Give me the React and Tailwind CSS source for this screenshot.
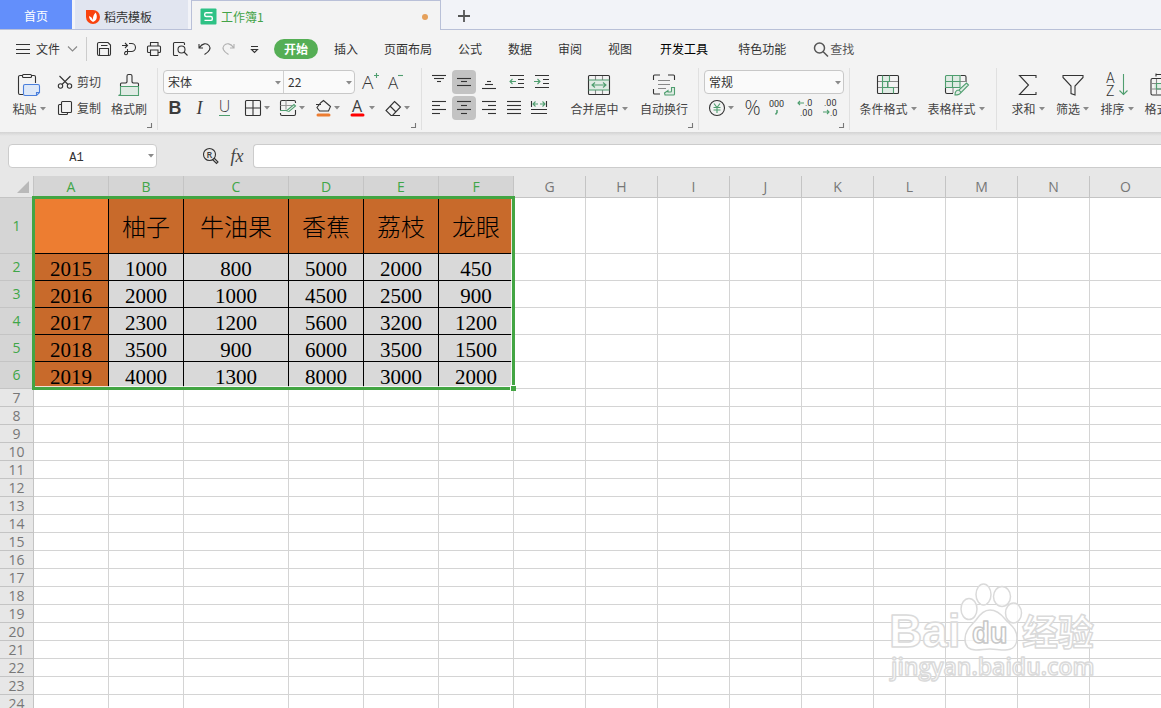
import clsx from 'clsx';

const menuItems = ['插入', '页面布局', '公式', '数据', '审阅', '视图'];
const extraMenuItems = ['开发工具', '特色功能'];

const columns = [
  { name: 'A', width: 'w-[75px]' },
  { name: 'B', width: 'w-[75px]' },
  { name: 'C', width: 'w-[105px]' },
  { name: 'D', width: 'w-[75px]' },
  { name: 'E', width: 'w-[75px]' },
  { name: 'F', width: 'w-[75px]' },
  { name: 'G', width: 'w-[72px]' },
  { name: 'H', width: 'w-[72px]' },
  { name: 'I', width: 'w-[72px]' },
  { name: 'J', width: 'w-[72px]' },
  { name: 'K', width: 'w-[72px]' },
  { name: 'L', width: 'w-[72px]' },
  { name: 'M', width: 'w-[72px]' },
  { name: 'N', width: 'w-[72px]' },
  { name: 'O', width: 'w-[72px]' },
];

const data = [
  ['', '柚子', '牛油果', '香蕉', '荔枝', '龙眼'],
  ['2015', '1000', '800', '5000', '2000', '450'],
  ['2016', '2000', '1000', '4500', '2500', '900'],
  ['2017', '2300', '1200', '5600', '3200', '1200'],
  ['2018', '3500', '900', '6000', '3500', '1500'],
  ['2019', '4000', '1300', '8000', '3000', '2000'],
];

const ROW_COUNT = 24;
const GREEN = '#4f9e6f';

// Base svg wrapper for all toolbar icons
function Icon({ w = 24, h = w, className, children }) {
  return (
    <svg
      width={w}
      height={h}
      viewBox={`0 0 ${w} ${h}`}
      className={clsx('shrink-0 overflow-visible', className)}
      fill="none"
      stroke="#333"
      strokeWidth="1.1"
      aria-hidden="true"
    >
      {children}
    </svg>
  );
}

function Arrow({ className }) {
  return (
    <svg width="6" height="4" viewBox="0 0 6 4" className={clsx('shrink-0', className)} aria-hidden="true">
      <path d="M0 0h6L3 3.5z" fill="#8a8a8a" />
    </svg>
  );
}

/* ---------- Tabs ---------- */

function TabBar() {
  return (
    <div className="flex h-[30px] shrink-0 bg-[#f2f3f8]">
      <button className="w-[72px] border-b border-[#b9c0d8] bg-[#638ffb] pt-0.5 text-white">首页</button>
      <div className="w-[3px] border-b border-[#b9c0d8]" />
      <button className="flex w-[113px] items-center gap-1 border-b border-[#b9c0d8] bg-[#e1e5f0] px-2.5 pt-1 text-[#333]">
        <Icon w={15}>
          <path d="M1 1h7a7 7 0 1 1-7 7z" fill="#f9430f" stroke="none" />
          <path d="M8 13C5.500 11.500 4 9.500 4 7c2 .7 3.300 2 4 4-.3-3 .8-5.800 2.700-7.500C12.800 7.500 12 11.500 8 13z" fill="#fff" stroke="none" />
        </Icon>
        稻壳模板
      </button>
      <div className="w-[3px] border-b border-[#b9c0d8]" />
      <div className="flex w-[250px] items-center border-x border-t border-[#b9c0d8] bg-[#f3f3f3] pt-0.5 pr-3 pl-2">
        <button className="flex flex-1 items-center gap-1 text-[#44a348]">
          <Icon w={17}>
            <rect x="0.500" y="0.500" width="16" height="16" rx="1" fill="#2ec285" stroke="none" />
            <path d="M12.500 4.800H6.200a1.500 1.500 0 0 0-1.500 1.500v.7a1.500 1.500 0 0 0 1.500 1.500h4.600a1.500 1.500 0 0 1 1.500 1.500v.9a1.500 1.500 0 0 1-1.500 1.500H4.500" stroke="#fff" strokeWidth="1.400" />
          </Icon>
          工作簿1
        </button>
        <span className="size-1.5 rounded-full bg-[#e5a05a]" />
      </div>
      <button aria-label="新建" className="w-[46px] border-b border-[#b9c0d8] pl-4 pt-0.5">
        <Icon w={14}>
          <path d="M7 1v12M1 7h12" stroke="#555" strokeWidth="1.800" />
        </Icon>
      </button>
      <div className="flex-1 border-b border-[#b9c0d8]" />
    </div>
  );
}

/* ---------- Menu ---------- */

function QuickAccess() {
  return (
    <div className="flex">
      <button aria-label="保存" className="flex w-[25px] justify-center">
        <Icon w={16}>
          <path d="M1.500 3A1.500 1.500 0 0 1 3 1.500h9l2.500 2.500v9a1.500 1.500 0 0 1-1.500 1.500H3A1.500 1.500 0 0 1 1.500 13zM3.500 14V7.500h9V14M5 4.500h6.500" />
        </Icon>
      </button>
      <button aria-label="输出" className="flex w-[25px] justify-center">
        <Icon w={16}>
          <path d="M1 4.500h5M4 2l2.500 2.500L4 7M8 2.500h2.500a4 4 0 0 1 0 8H4M6.500 8v4.500a1.500 1.500 0 1 1-1.500-1.700" />
        </Icon>
      </button>
      <button aria-label="打印" className="flex w-[26px] justify-center">
        <Icon w={16}>
          <path d="M4.500 5V1.500h7.500V5M4 11.500H2.500a1 1 0 0 1-1-1V6a1 1 0 0 1 1-1H13.500a1 1 0 0 1 1 1v4.500a1 1 0 0 1-1 1H12M4.500 9h7.500v5.500H4.500z" />
        </Icon>
      </button>
      <button aria-label="打印预览" className="flex w-[25px] justify-center">
        <Icon w={16}>
          <path d="M6 14.500H2.500a1 1 0 0 1-1-1v-11a1 1 0 0 1 1-1h9a1 1 0 0 1 1 1V4" />
          <circle cx="9.500" cy="8.500" r="3.500" />
          <path d="M12 11l3.500 3.500" />
        </Icon>
      </button>
      <button aria-label="撤销" className="flex w-[25px] justify-center">
        <Icon w={16}>
          <path d="M2 3v4h4M2.500 6.500C5 2.500 9.500 1.500 12 4.500c2 2.600 1 5.500-4.500 9" />
        </Icon>
      </button>
      <button aria-label="恢复" className="flex w-[24px] justify-center">
        <Icon w={16} className="opacity-35">
          <path d="M13 3v4H9M12.500 6.500C10 2.500 5.500 1.500 3 4.500c-2 2.600-1 5.500 4.500 9" />
        </Icon>
      </button>
      <button aria-label="自定义快速访问" className="flex w-[27px] justify-center pt-1">
        <Icon w={9} h={10}>
          <path d="M1 1.500h7M1.500 4.500h6L4.500 7.500z" />
        </Icon>
      </button>
    </div>
  );
}

function MenuBar() {
  return (
    <div className="flex h-[38px] shrink-0 items-center overflow-hidden pl-4 text-[#333]">
      <button className="flex items-center gap-1.5">
        <Icon w={14}>
          <path d="M0 2.500h14M0 7.500h14M0 11.500h14" />
        </Icon>
        文件
        <Icon w={11} h={6} className="ml-px">
          <path d="M1 .5l4.500 4.500L10 .5" stroke="#888" />
        </Icon>
      </button>
      <div className="mr-1 ml-2 h-6 w-px shrink-0 bg-[#ccc]" />
      <QuickAccess />
      <button className="ml-1.5 h-5 w-11 shrink-0 rounded-full bg-[#55ae55] font-bold text-white">开始</button>
      <nav className="ml-[3px] flex shrink-0">
        {menuItems.map((item) => (
          <button key={item} className="px-[13px]">
            {item}
          </button>
        ))}
        {extraMenuItems.map((item) => (
          <button key={item} className={clsx('px-[15px]', item === '开发工具' && 'text-black')}>
            {item}
          </button>
        ))}
      </nav>
      <button className="ml-3 flex shrink-0 items-center text-[#555]">
        <Icon w={16} className="mr-px">
          <circle cx="6.500" cy="7" r="5" stroke="#555" strokeWidth="1.500" />
          <path d="M10 10.500l5 5" stroke="#555" strokeWidth="1.500" />
        </Icon>
        查找
      </button>
    </div>
  );
}

/* ---------- Ribbon ---------- */

function Group({ className, corner, children }) {
  return (
    <div className={clsx('relative flex h-[62px] shrink-0 border-r border-[#e0e0e0] pt-0.5', className)}>
      {children}
      {corner && (
        <Icon w={5} className="absolute right-[5px] bottom-0.5">
          <path d="M4.500 0v4.500H0" stroke="#777" />
        </Icon>
      )}
    </div>
  );
}

function BigButton({ label, arrow, width, children }) {
  return (
    <button className={clsx('flex shrink-0 flex-col items-center pt-[3px]', width)}>
      <Icon>{children}</Icon>
      <span className="flex h-6 items-center gap-[3px] whitespace-nowrap">
        {label}
        {arrow && <Arrow />}
      </span>
    </button>
  );
}

function ToolButton({ label, active, className, children }) {
  return (
    <button
      aria-label={label}
      className={clsx('flex h-6 w-6 items-center justify-center rounded', active && 'bg-[#c3c3c3]', className)}
    >
      {children}
    </button>
  );
}

function SplitButton({ label, children }) {
  return (
    <button aria-label={label} className="flex h-6 w-[35px] items-center">
      <Icon w={20}>{children}</Icon>
      <Arrow className="ml-px" />
    </button>
  );
}

function Dropdown({ label, value, className }) {
  return (
    <label aria-label={label} className={clsx('relative block h-[22px]', className)}>
      <select
        aria-label={label}
        defaultValue={value}
        className="block h-full w-full appearance-none bg-transparent pl-1 leading-[22px] text-[#333] outline-none"
      >
        <option>{value}</option>
      </select>
      <Arrow className="pointer-events-none absolute top-2.5 right-0.5" />
    </label>
  );
}

// Three or four horizontal strokes, one [x1, x2] pair per stroke
function Lines({ ys, xs }) {
  return (
    <Icon w={16}>
      {xs.map(([a, b], i) => (
        <path key={i} d={`M${a} ${ys[i]}.500H${b}`} />
      ))}
    </Icon>
  );
}

function ClipboardGroup() {
  return (
    <Group corner className="w-[158px] pl-2">
      <BigButton label="粘贴" arrow width="w-[42px]">
        <path d="M6 21.500H3A1.500 1.500 0 0 1 1.500 20V4A1.500 1.500 0 0 1 3 2.500h2.500M14.500 2.500H17A1.500 1.500 0 0 1 18.500 4v6" />
        <rect x="5.500" y="1.500" width="9" height="3" rx="1" />
        <path d="M8 11.500h13a1.500 1.500 0 0 1 1.500 1.500v6.500l-3 3H8A1.500 1.500 0 0 1 6.500 21v-8A1.500 1.500 0 0 1 8 11.500zM22.500 19.500h-3v3" fill="#dde8f8" stroke="#4a7fdc" />
      </BigButton>
      <div className="ml-1 flex w-[53px] flex-col gap-0.5 pl-[3px]">
        <button className="flex h-6 items-center gap-1">
          <Icon w={16}>
            <circle cx="3.500" cy="12" r="2.200" />
            <circle cx="12.500" cy="12" r="2.200" />
            <path d="M5 10.500L13.500 2M11 10.500L2.500 2" />
          </Icon>
          剪切
        </button>
        <button className="flex h-6 items-center gap-1">
          <Icon w={16}>
            <rect x="4.500" y="1.500" width="10" height="11" rx="1" />
            <path d="M4 4.500H2.500a1 1 0 0 0-1 1v8a1 1 0 0 0 1 1h7a1 1 0 0 0 1-1V13" />
          </Icon>
          复制
        </button>
      </div>
      <BigButton label="格式刷" width="w-11">
        <path d="M3.500 13.500h18v9H1.500l2-1z" fill="#e0ebe4" stroke={GREEN} />
        <path d="M3.500 13V11a1 1 0 0 1 1-1h4.500l1-1V3a1.500 1.500 0 0 1 1.500-1.500h2A1.500 1.500 0 0 1 15 3v6l1 1h4.500a1 1 0 0 1 1 1v2" />
      </BigButton>
    </Group>
  );
}

function FontGroup() {
  return (
    <Group corner className="w-[264px] flex-col gap-0.5 pl-[5px]">
      <div className="flex">
        <div className="flex rounded border border-[#c8c8c8] bg-[#fafafa]">
          <Dropdown label="字体" value="宋体" className="w-[120px] border-r border-[#d0d0d0]" />
          <Dropdown label="字号" value="22" className="w-[70px]" />
        </div>
        <ToolButton label="增大字号" className="ml-1">
          <Icon w={20}>
            <text x="1" y="17" fontFamily="Open Sans" fontSize="19" fontWeight="300" fill="#333" stroke="none">A</text>
            <path d="M15.500 1v5M13 3.500h5" stroke={GREEN} />
          </Icon>
        </ToolButton>
        <ToolButton label="减小字号" className="ml-0.5">
          <Icon w={20}>
            <text x="1" y="17" fontFamily="Open Sans" fontSize="17" fontWeight="300" fill="#333" stroke="none">A</text>
            <path d="M11 3.500h5" stroke={GREEN} />
          </Icon>
        </ToolButton>
      </div>
      <div className="flex text-[#3c3c3c]">
        <button className="h-6 w-6 font-['Liberation_Sans'] text-lg leading-6 font-bold">B</button>
        <button className="h-6 w-[25px] font-['Liberation_Serif'] text-lg leading-6 italic">I</button>
        <button className="mr-1.5 flex h-6 w-[25px] justify-center pt-0.5">
          <span className="h-[18px] border-b border-[#4f9e6f] font-['Open_Sans'] text-base leading-4 font-light">U</span>
        </button>
        <SplitButton label="边框">
          <rect x="2.500" y="2.500" width="15" height="15" rx="1" />
          <path d="M10 2.500v15M2.500 10h15" />
        </SplitButton>
        <SplitButton label="绘图边框">
          <path d="M17.500 5V4A1.500 1.500 0 0 0 16 2.500H4A1.500 1.500 0 0 0 2.500 4v8M2.500 15v1A1.500 1.500 0 0 0 4 17.500h12a1.500 1.500 0 0 0 1.500-1.500v-4" />
          <path d="M2.500 7.500h12M8 2.500v9" stroke="#999" />
          <path d="M2 12.500h7l7-6 1.500 1.500-6.500 5.500-3-1" stroke={GREEN} />
        </SplitButton>
        <SplitButton label="填充颜色">
          <path d="M3 6.500h5M8 4.500L10.500 2.500 17.500 8.500 15.500 13H6.500L4 9.500z" />
          <path d="M5 17h11" stroke="#ed7d31" strokeWidth="3" strokeLinecap="round" />
        </SplitButton>
        <SplitButton label="字体颜色">
          <text x="4" y="14" fontFamily="Open Sans" fontSize="16" fill="#3c3c3c" stroke="none">A</text>
          <path d="M4 17h11" stroke="#f00" strokeWidth="3" strokeLinecap="round" />
        </SplitButton>
        <SplitButton label="清除">
          <path d="M11.500 3.500l6 5.500-8 8.500H8L3 12.500zM7 8l6 6M9 17.500h8" />
        </SplitButton>
      </div>
    </Group>
  );
}

function AlignGroup() {
  return (
    <Group corner className="w-[277px] pl-[5px]">
      <div className="flex w-[127px] flex-col gap-0.5">
        <div className="flex gap-px">
          <ToolButton label="顶端对齐"><Lines ys={[1, 4, 7]} xs={[[1, 15], [3, 13], [6, 10]]} /></ToolButton>
          <ToolButton label="垂直居中" active><Lines ys={[4, 7, 11]} xs={[[1, 15], [5, 11], [1, 15]]} /></ToolButton>
          <ToolButton label="底端对齐"><Lines ys={[7, 10, 14]} xs={[[6, 10], [4, 12], [1, 15]]} /></ToolButton>
          <ToolButton label="减少缩进" className="ml-[3px]">
            <Icon w={16}>
              <path d="M1 1.500h14M9 5.500h6M9 9.500h6M1 13.500h14" />
              <path d="M1 7.500h6M3.500 5L1 7.500 3.500 10" stroke={GREEN} />
            </Icon>
          </ToolButton>
          <ToolButton label="增加缩进">
            <Icon w={16}>
              <path d="M1 1.500h14M9 5.500h6M9 9.500h6M1 13.500h14" />
              <path d="M0 7.500h6M3.500 5L6 7.500 3.500 10" stroke={GREEN} />
            </Icon>
          </ToolButton>
        </div>
        <div className="flex gap-px">
          <ToolButton label="左对齐"><Lines ys={[1, 5, 9, 13]} xs={[[1, 15], [1, 9], [1, 15], [1, 9]]} /></ToolButton>
          <ToolButton label="水平居中" active><Lines ys={[1, 5, 9, 13]} xs={[[1, 15], [5, 11], [1, 15], [5, 11]]} /></ToolButton>
          <ToolButton label="右对齐"><Lines ys={[1, 5, 9, 13]} xs={[[1, 15], [7, 15], [1, 15], [7, 15]]} /></ToolButton>
          <ToolButton label="两端对齐"><Lines ys={[1, 5, 9, 13]} xs={[[1, 15], [1, 15], [1, 15], [1, 15]]} /></ToolButton>
          <ToolButton label="分散对齐">
            <Icon w={16}>
              <path d="M.5 1v6M15.500 1v6M0 9.500h16M0 13.500h16" />
              <path d="M2 4h5M9 4h5M4.500 1.500L2 4l2.500 2.500M11.500 1.500L14 4l-2.500 2.500" stroke={GREEN} />
            </Icon>
          </ToolButton>
        </div>
      </div>
      <div className="ml-2.5 flex">
        <BigButton label="合并居中" arrow width="w-[70px]">
          <path d="M1.500 7h21v10h-21z" fill="#e0ebe4" stroke="none" />
          <path d="M8.500 2v5M15.500 2v5M8.500 17v5M15.500 17v5" stroke="#888" />
          <rect x="1.500" y="2.500" width="21" height="19" rx="1" />
          <path d="M1.500 7h21M1.500 17h21M5 12h14M8 9.500L5 12l3 2.500M16 9.500l3 2.500-3 2.500" stroke={GREEN} />
        </BigButton>
        <BigButton label="自动换行" width="w-[60px]">
          <path d="M1.500 7V3a1 1 0 0 1 1-1H8M16 2h5.500a1 1 0 0 1 1 1v4M1.500 16v4a1 1 0 0 0 1 1H8" />
          <path d="M6 7.500h12M6 11.500h12M6 15.500h8" stroke="#888" />
          <path d="M12.500 20l3.500-2.500v1.500h2.500a1 1 0 0 0 1-1v-3.500h3V21a1 1 0 0 1-1 1H13z" fill="#e0ebe4" stroke={GREEN} />
        </BigButton>
      </div>
    </Group>
  );
}

function NumberGroup() {
  return (
    <Group corner className="w-[151px] flex-col gap-0.5 pl-[5px]">
      <div className="flex w-[140px] rounded border border-[#c8c8c8] bg-[#fafafa]">
        <Dropdown label="数字格式" value="常规" className="w-full" />
      </div>
      <div className="flex pl-[3px]">
        <SplitButton label="货币">
          <circle cx="10" cy="10" r="7.500" />
          <path d="M7 5.500l3 4 3-4M6.500 9.500h7M6.500 12h7M10 9.500V15" stroke={GREEN} />
        </SplitButton>
        <button className="h-6 w-[21px] font-['Open_Sans'] text-xl leading-6 font-light text-[#333]">%</button>
        <ToolButton label="千位分隔样式" className="ml-0.5">
          <Icon w={20}>
            <text x="2" y="9" fontFamily="Roboto" fontSize="9" fill="#333" stroke="none">000</text>
            <path d="M10 12v2.500l-1.500 2" stroke={GREEN} strokeWidth="1.500" />
          </Icon>
        </ToolButton>
        <ToolButton label="增加小数位数" className="ml-[5px]">
          <Icon w={20}>
            <text x="9" y="8" fontFamily="Roboto" fontSize="9" fill="#333" stroke="none">.0</text>
            <text x="4" y="18" fontFamily="Roboto" fontSize="9" fill="#333" stroke="none">.00</text>
            <path d="M2 5h6M4 3L2 5l2 2" stroke={GREEN} />
          </Icon>
        </ToolButton>
        <ToolButton label="减少小数位数" className="ml-px">
          <Icon w={20}>
            <text x="3" y="8" fontFamily="Roboto" fontSize="9" fill="#333" stroke="none">.00</text>
            <text x="9" y="18" fontFamily="Roboto" fontSize="9" fill="#333" stroke="none">.0</text>
            <path d="M2 14h6M6 12l2 2-2 2" stroke={GREEN} />
          </Icon>
        </ToolButton>
      </div>
    </Group>
  );
}

function StyleGroup() {
  return (
    <Group className="w-[147px] gap-0.5 pl-[5px]">
      <BigButton label="条件格式" arrow width="w-[66px]">
        <path d="M6.500 2.500h7v6h-4v6h8v6h-11z" fill="#e0ebe4" stroke="none" />
        <path d="M1.500 8.500h21M1.500 14.500h21M12 8.500v6" stroke="#888" />
        <rect x="1.500" y="2.500" width="21" height="18" rx="1" />
        <path d="M6.500 2.500v18M13.500 2.500v6h-7M11.500 8.500v6h-5M11.500 14.500h6v6" stroke={GREEN} />
      </BigButton>
      <BigButton label="表格样式" arrow width="w-[66px]">
        <path d="M1.500 2.500h14v12h-14z" fill="#e0ebe4" stroke="none" />
        <path d="M16.500 2.500h4a1.500 1.500 0 0 1 1.500 1.500v5M1.500 15v4a1.500 1.500 0 0 0 1.500 1.500h6" />
        <path d="M16 8.500h6M9 15v5" stroke="#888" />
        <path d="M16 2.500H2.500a1 1 0 0 0-1 1v11H16zM1.500 8.500H16M8.500 2.500v12" stroke={GREEN} />
        <path d="M11 22c0-3 1-5 4-5l7.500-7 2 2-8 8c-1 2-3 2-5.500 2zM15 17l2 2.500" fill="#e0ebe4" stroke={GREEN} />
      </BigButton>
    </Group>
  );
}

function EditGroup() {
  return (
    <Group className="border-r-0 pl-[9px]">
      <BigButton label="求和" arrow width="w-11">
        <path d="M20 5V2.500H3.500l9 9.500-9 9.500H20V19" />
      </BigButton>
      <BigButton label="筛选" arrow width="w-[45px]">
        <path d="M2 2.500h20v2l-8 8.500v9l-4-1.500V13L2 4.500z" />
      </BigButton>
      <BigButton label="排序" arrow width="w-11">
        <text x="1" y="10" fontFamily="Roboto" fontSize="14" fontWeight="300" fill="#333" stroke="none">A</text>
        <text x="1" y="23" fontFamily="Roboto" fontSize="14" fontWeight="300" fill="#333" stroke="none">Z</text>
        <path d="M18.500 1v20.500M14.500 17.500l4 4 4-4" stroke={GREEN} />
      </BigButton>
      <BigButton label="格式" arrow width="w-11">
        <path d="M5 10h14v6H5z" fill="#e0ebe4" stroke="none" />
        <path d="M7 .5v3M7 1.500h12M2 7a1.500 1.500 0 0 1 1.500-1.500h17V22h-17A1.500 1.500 0 0 1 2 20.500z" />
        <path d="M2 10.500h18M2 16h18M7.500 6v16" stroke="#888" />
        <path d="M7.500 10.500h13V16h-13z" stroke={GREEN} />
      </BigButton>
    </Group>
  );
}

function Ribbon() {
  return (
    <div className="flex h-16 shrink-0 overflow-hidden text-[#444]">
      <ClipboardGroup />
      <FontGroup />
      <AlignGroup />
      <NumberGroup />
      <StyleGroup />
      <EditGroup />
    </div>
  );
}

/* ---------- Formula bar ---------- */

function FormulaBar() {
  return (
    <div className="h-11 shrink-0 bg-[#e7e7e7]">
      <div className="h-1 bg-linear-to-b from-[#d3d3d3] to-[#e7e7e7]" />
      <div className="flex items-center pt-2 pl-2">
        <label className="relative block">
          <span className="sr-only">名称框</span>
          <input
            defaultValue="A1"
            className="h-6 w-[149px] rounded border border-[#ccc] bg-white pt-1 pr-3 text-center font-['Liberation_Mono'] text-xs text-[#333] outline-none"
          />
          <Arrow className="absolute top-2.5 right-[3px]" />
        </label>
        <button aria-label="查找单元格" className="ml-[45px]">
          <Icon w={18}>
            <circle cx="7.500" cy="7.500" r="6" />
            <path d="M12 11l4 4-1.500 1.500-4-4" />
            <text x="4.500" y="11" fontFamily="Open Sans" fontSize="9" fontWeight="600" fill="#3c3c3c" stroke="none">R</text>
          </Icon>
        </button>
        <button className="mr-1 ml-[5px] w-6 font-['Liberation_Serif'] text-lg leading-6 text-[#444] italic">fx</button>
        <input aria-label="编辑栏" className="h-6 min-w-0 flex-1 rounded-l border border-r-0 border-[#ccc] bg-white px-2 outline-none" />
      </div>
    </div>
  );
}

/* ---------- Sheet ---------- */

function Cell({ row, col }) {
  const inTable = row < 6 && col < 6;
  const isHead = row === 0 || col === 0;
  return (
    <td
      className={clsx(
        'overflow-hidden border-r border-b p-0 text-center whitespace-nowrap',
        !inTable && 'border-[#d4d4d4] bg-white',
        inTable && 'border-black text-black',
        inTable && row === 0 && 'pt-0.5 text-2xl font-light',
        inTable && row > 0 && "pt-1 font-['Liberation_Serif'] text-[21px] leading-[22px]",
        inTable && isHead && (row === 0 && col === 0 ? 'bg-[#ed7d31]' : 'bg-[#c86a2b]'),
        inTable && !isHead && 'bg-[#d9d9d9]'
      )}
    >
      {inTable ? data[row][col] : null}
    </td>
  );
}

function Sheet() {
  return (
    <div className="relative min-h-0 flex-1 overflow-hidden bg-white">
      <table className="w-[1162px] table-fixed border-separate border-spacing-0 font-['Open_Sans','Noto_Sans_CJK_SC',sans-serif] text-sm leading-4">
        <colgroup>
          <col className="w-[34px]" />
          {columns.map((c) => (
            <col key={c.name} className={c.width} />
          ))}
        </colgroup>
        <thead>
          <tr className="h-[22px]">
            <th aria-label="全选" className="border-r border-b border-[#c4c4c4] bg-[#e7e7e7] p-0">
              <svg width="12" height="12" viewBox="0 0 12 12" className="ml-[17px]" aria-hidden="true">
                <path d="M12 0v12H0z" fill="#b9b9b9" />
              </svg>
            </th>
            {columns.map((c, i) => (
              <th
                key={c.name}
                className={clsx(
                  'border-r border-b border-[#c4c4c4] p-0 font-normal',
                  i < 6 ? 'bg-[#d5d5d5] text-[#3fa648]' : 'bg-[#e7e7e7] text-[#777]'
                )}
              >
                {c.name}
              </th>
            ))}
          </tr>
        </thead>
        <tbody>
          {Array.from({ length: ROW_COUNT }, (_, r) => (
            <tr key={r} className={clsx(r === 0 && 'h-14', r > 0 && r < 6 && 'h-[27px]', r >= 6 && 'h-[18px]')}>
              <th
                className={clsx(
                  'border-r border-b border-[#c4c4c4] p-0 font-normal',
                  r < 6 ? 'bg-[#d5d5d5] text-[#3fa648]' : 'bg-[#e7e7e7] text-[#777]'
                )}
              >
                {r + 1}
              </th>
              {columns.map((c, i) => (
                <Cell key={c.name} row={r} col={i} />
              ))}
            </tr>
          ))}
        </tbody>
      </table>

      {/* Selected range with its fill handle */}
      <div className="pointer-events-none absolute top-5 left-8 h-[194px] w-[483px] border-3 border-[#43a543]">
        <div className="h-full w-full border-r border-b border-white/80" />
        <div className="absolute -right-1 -bottom-1 size-1.5 border-t border-l border-white bg-[#43a543]" />
      </div>

      <Watermark />
    </div>
  );
}

function Watermark() {
  return (
    <svg
      width="216"
      height="106"
      viewBox="0 0 216 106"
      className="pointer-events-none absolute right-[61px] bottom-[22px] overflow-visible"
      fill="#fff"
      fillOpacity="0.75"
      stroke="#dadada"
      strokeWidth="1.500"
      strokeLinejoin="round"
    >
      <text x="5" y="67" fontFamily="Liberation Sans" fontSize="46" fontWeight="bold">Bai</text>
      <ellipse cx="99.500" cy="14.500" rx="7.500" ry="10.500" />
      <ellipse cx="118" cy="16.500" rx="8.500" ry="10" />
      <ellipse cx="85" cy="29" rx="8" ry="10.500" />
      <ellipse cx="129.500" cy="33" rx="8" ry="10" />
      <path d="M106 30c7 0 11 4 15 9 5 6 12 9 12 19 0 8-5 12-12 12-6 0-10-1-15-1s-9 1-14 1c-7 0-11-4-11-11 0-9 6-13 11-19 4-6 8-10 14-10z" />
      <text x="88" y="63" fontFamily="Liberation Sans" fontSize="29" fontWeight="bold" stroke="#c8c8c8">du</text>
      <text x="138" y="66" fontFamily="Noto Sans CJK SC" fontSize="36" fontWeight="bold">经验</text>
      <text x="7" y="95" fontFamily="Open Sans" fontSize="23" fontWeight="600">jingyan.baidu.com</text>
    </svg>
  );
}

export default function App() {
  return (
    <div className="flex h-screen flex-col overflow-hidden bg-[#f3f3f3] font-['Noto_Sans_CJK_SC',sans-serif] text-xs">
      <TabBar />
      <MenuBar />
      <Ribbon />
      <FormulaBar />
      <Sheet />
    </div>
  );
}
